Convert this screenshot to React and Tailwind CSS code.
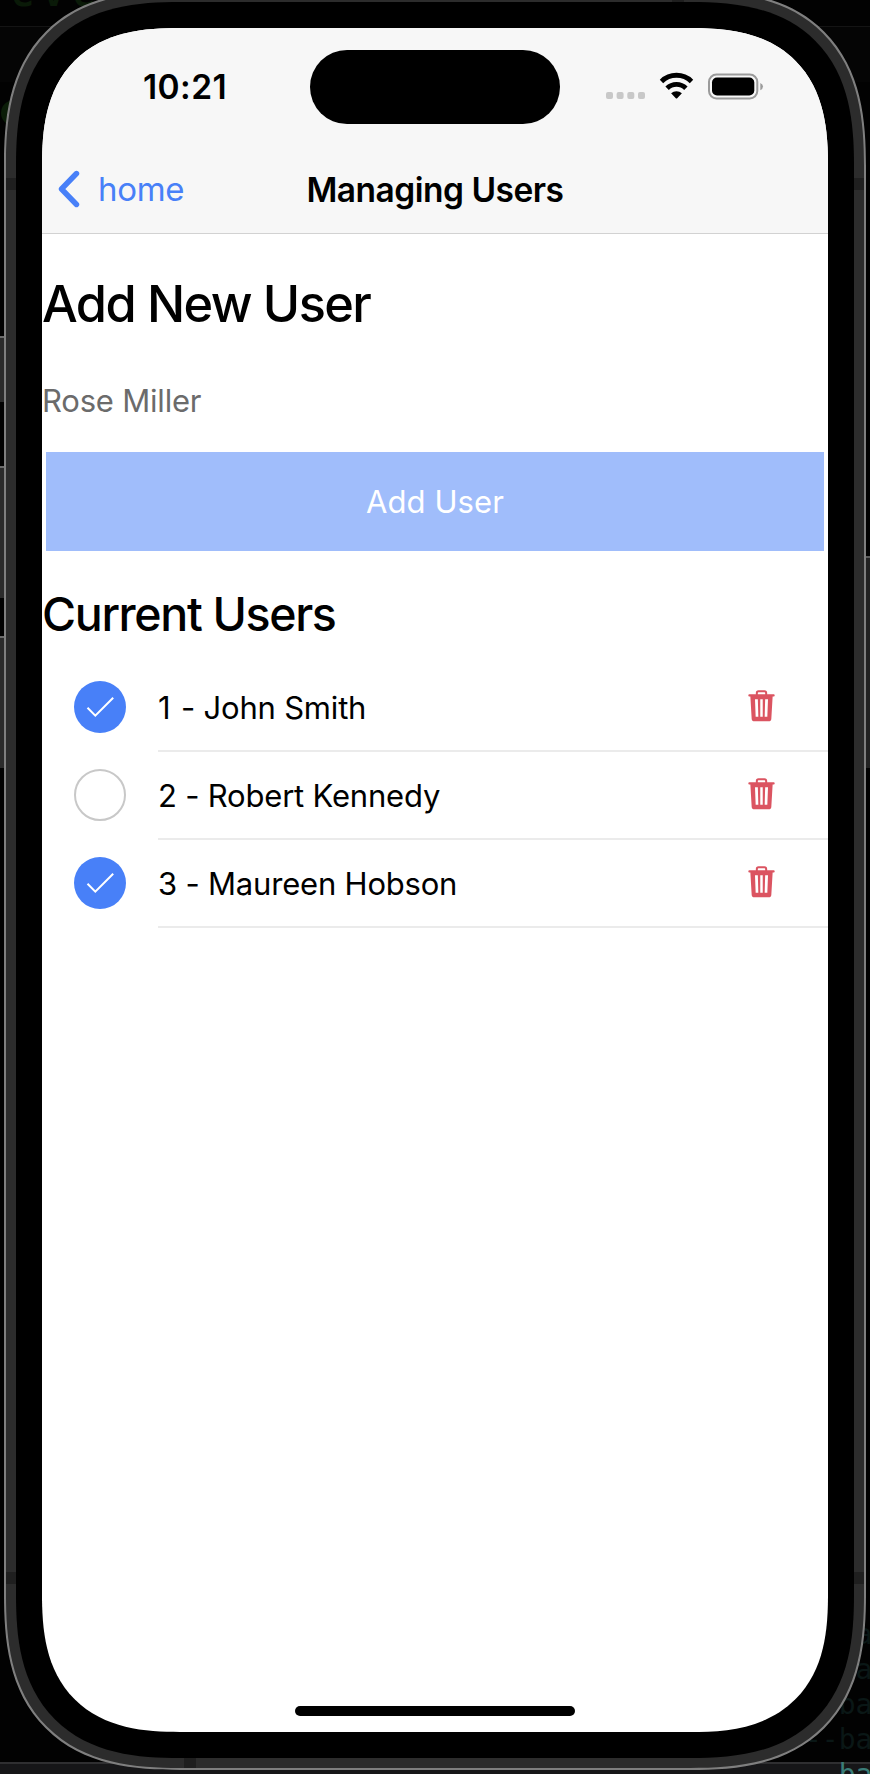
const users = [
  { id: 1, name: "John Smith", checked: true },
  { id: 2, name: "Robert Kennedy", checked: false },
  { id: 3, name: "Maureen Hobson", checked: true },
];

function StatusIcons() {
  return (
    <svg width="160" height="28" viewBox="0 0 160 28" className="block shrink-0">
      <g fill="#c8c8c8">
        <rect x="0" y="20" width="7" height="7" rx="2" />
        <rect x="10.6" y="20" width="7" height="7" rx="2" />
        <rect x="21.3" y="20" width="7" height="7" rx="2" />
        <rect x="32" y="20" width="7" height="7" rx="2" />
      </g>
      <g fill="none" stroke="#000" strokeWidth="4.9">
        <path d="M55.5 9.4 A21.5 21.5 0 0 1 85.5 9.4" />
        <path d="M61.1 16.2 A13.5 13.5 0 0 1 79.9 16.2" />
      </g>
      <path d="M65.1 21.2 A8.2 8.2 0 0 1 75.9 21.2 L71.2 26.2 Q70.5 27 69.8 26.2 Z" fill="#000" />
      <rect x="103" y="2.5" width="48.3" height="24" rx="7.5" fill="none" stroke="#9b9b9b" strokeWidth="2" />
      <rect x="106" y="5.5" width="42.3" height="18" rx="5" fill="#000" />
      <path d="M154.3 11 Q157 12 157 14.6 Q157 17.2 154.3 18.2 Z" fill="#9b9b9b" />
    </svg>
  );
}

function Check({ checked }) {
  return checked ? (
    <svg width="52" height="52" viewBox="0 0 52 52" className="block shrink-0">
      <circle cx="26" cy="26" r="26" fill="#4880f8" />
      <path d="M13.5 26.8 L21.3 34.7 L39.2 16.7" fill="none" stroke="#fff" strokeWidth="2" />
    </svg>
  ) : (
    <div className="h-[52px] w-[52px] shrink-0 rounded-full border-2 border-[#c8c8c8]" />
  );
}

function Trash() {
  return (
    <svg width="27" height="32" viewBox="0 0 81 96" className="mr-[53px] mb-[2px] block shrink-0">
      <path d="M26.5 15 V9 Q26.5 4 31.5 4 H49.5 Q54.5 4 54.5 9 V15" fill="none" stroke="#db5461" strokeWidth="6" />
      <rect x="1" y="13" width="79" height="6.5" rx="3" fill="#db5461" />
      <path
        fillRule="evenodd"
        fill="#db5461"
        d="M7 18 H74 L70 86 Q69.5 94 61.5 94 H19.5 Q11.5 94 11 86 Z M21 28 L23 80 H31 L29.5 28 Z M36.8 28 V80 H44.2 V28 Z M51.5 28 L50 80 H58 L60 28 Z"
      />
    </svg>
  );
}

export default function App() {
  return (
    <div className="relative h-[1774px] w-[870px] overflow-hidden bg-[#020202] font-['Inter','Liberation_Sans',sans-serif] text-black">
      <div className="absolute inset-x-0 top-[26px] h-[56px] border-t border-[#141414] bg-[#050505]" />
      <div className="absolute inset-x-0 bottom-0 h-[12px] border-t-2 border-[#2f2f31] bg-[#161618]" />
      <div className="absolute -top-[24px] left-[12px] font-['DejaVu_Sans_Mono',monospace] text-[36px] leading-[36px] font-bold tracking-[9px] text-[#0a1a08]">eve</div>
      <div className="absolute top-[100px] left-[1px] h-[26px] w-[26px] rounded-full bg-[#0b1d08]" />
      <div className="absolute top-[1617px] left-[805px] flex flex-col font-['DejaVu_Sans_Mono',monospace] text-[28px] leading-[35px] whitespace-pre text-[#0a1716]">
        <span>{"   a"}</span>
        <span>{"   a"}</span>
        <span>{"  ba"}</span>
        <span>--ba</span>
        <span className="text-[#3a7d78]">{"  ba"}</span>
      </div>
      <div className="absolute top-[336px] left-0 h-[66px] w-[4px] border-t-2 border-[#6c6c6c] bg-[#2b2b2b]" />
      <div className="absolute top-[466px] left-0 h-[132px] w-[4px] border-t-2 border-[#6c6c6c] bg-[#2b2b2b]" />
      <div className="absolute top-[636px] left-0 h-[132px] w-[4px] border-t-2 border-[#6c6c6c] bg-[#2b2b2b]" />
      <div className="absolute top-[556px] right-0 h-[212px] w-[4px] border-t-2 border-[#5c5c5c] bg-[#222222]" />

      <div className="relative -mt-[10px] ml-[4px] h-[1780px] w-[862px] rounded-[176px] [corner-shape:superellipse(1.36)] bg-[#7f7f7f] p-[2px]">
        <div className="relative h-full overflow-hidden rounded-[174px] [corner-shape:superellipse(1.36)] bg-[#2c2c2c] p-[10px]">
          <div className="absolute top-[186px] left-0 h-[12px] w-full bg-[#1f1f1f]" />
          <div className="absolute top-[1580px] left-0 h-[12px] w-full bg-[#1f1f1f]" />
          <div className="absolute top-0 left-[666px] h-[12px] w-[12px] bg-[#1f1f1f]" />
          <div className="absolute bottom-0 left-[178px] h-[12px] w-[12px] bg-[#1f1f1f]" />
          <div className="relative h-full rounded-[164px] [corner-shape:superellipse(1.36)] bg-black p-[26px]">
            <main className="flex h-full flex-col overflow-hidden rounded-[138px] [corner-shape:superellipse(1.36)] bg-white">
              <header className="h-[206px] shrink-0 border-b border-[#d2d2d2] bg-[#f7f7f7]">
                <div className="flex h-[118px] items-start pt-[22px]">
                  <div className="w-[268px] pt-[17px] pl-[101px] text-[33.5px] leading-[40px] font-semibold tracking-[0.4px]">10:21</div>
                  <div className="h-[74px] w-[250px] rounded-full bg-black" />
                  <div className="pt-[22px] pl-[46px]"><StatusIcons /></div>
                </div>
                <div className="grid h-[87px] grid-cols-[1fr_auto_1fr] items-center">
                  <div className="flex items-center gap-[17px] pb-[1px] pl-[15px] text-[33px] leading-[40px] tracking-[-0.3px] text-[#4880f8]">
                    <svg width="24" height="38" viewBox="0 0 24 38" fill="none" stroke="currentColor" strokeWidth="5.4" strokeLinecap="round" strokeLinejoin="round">
                      <path d="M19.5 3.5 L4.5 19 L19.5 34.5" />
                    </svg>
                    <span>home</span>
                  </div>
                  <h1 className="text-[33.5px] leading-[40px] font-semibold tracking-[-0.5px] whitespace-nowrap">Managing Users</h1>
                </div>
              </header>
              <section className="flex flex-col">
                <h2 className="pt-[40px] text-[50.5px] leading-[60px] font-medium tracking-[-1.6px]">Add New User</h2>
                <div className="mt-[47px] text-[31px] leading-[40px] tracking-[-0.2px] text-[#6b6b6b]">Rose Miller</div>
                <button className="mx-[4px] mt-[31px] flex h-[99px] items-center justify-center bg-[#a0bdfb] pt-[2px] text-[31px] tracking-[0.1px] text-white">Add User</button>
                <h2 className="mt-[33px] text-[46.5px] leading-[60px] font-medium tracking-[-1.35px]">Current Users</h2>
              </section>
              <ul className="mt-[20px]">
                {users.map((u) => (
                  <li key={u.id} className="flex h-[88px] pl-[32px]">
                    <div className="w-[84px] pt-[17px]"><Check checked={u.checked} /></div>
                    <div className="flex flex-1 items-center justify-between border-b-2 border-[#ebebeb] text-[31px] tracking-[-0.2px]">
                      <span className="pt-[2px]">
                        <span className={u.id === 1 ? "tracking-[1.8px]" : ""}>{u.id}</span> - {u.name}
                      </span>
                      <Trash />
                    </div>
                  </li>
                ))}
              </ul>
              <div className="mx-auto mt-auto mb-[16px] h-[10px] w-[280px] rounded-full bg-black" />
            </main>
          </div>
        </div>
      </div>
    </div>
  );
}
